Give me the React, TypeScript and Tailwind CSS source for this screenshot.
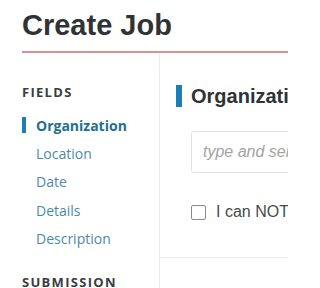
import React from 'react'

const FIELDS = ['Organization', 'Location', 'Date', 'Details', 'Description']

export default function App() {
  return (
    <div className="h-[288px] w-[288px] overflow-hidden bg-white pl-[22px]">
      {/* Header */}
      <div className="h-[53px] border-b-2 border-[#d9908f] pt-[7px]">
        <h1 className="text-[29px] font-bold leading-[36px] text-[#2f3336] [font-family:'Liberation_Sans',Arial,sans-serif]">
          Create Job
        </h1>
      </div>

      <div className="flex">
        {/* Sidebar */}
        <div className="w-[138px] shrink-0 border-r border-[#ececec] pt-[31px] [font-family:'Open_Sans',sans-serif]">
          <div className="text-[13px] font-bold uppercase leading-[16px] tracking-[0.1em] text-[#3a3d40]">Fields</div>
          <ul className="mt-[11px]">
            {FIELDS.map((f, i) => (
              <li key={f} className="flex h-[28.3px] items-center">
                {i === 0 ? (
                  <>
                    <span className="h-[16px] w-[4px] bg-[#1b7fb3]" />
                    <span className="ml-[10px] text-[14px] font-bold text-[#1f6f91]">{f}</span>
                  </>
                ) : (
                  <span className="ml-[14px] text-[14px] text-[#4b8aa6]">{f}</span>
                )}
              </li>
            ))}
          </ul>
          <div className="mt-[22px] text-[13px] font-bold uppercase leading-[16px] tracking-[0.1em] text-[#3a3d40]">Submission</div>
        </div>

        {/* Main */}
        <div className="min-w-0 flex-1 [font-family:'Liberation_Sans',Arial,sans-serif]">
          <div className="h-[204px] pl-[16px] pt-[31px]">
            <div className="flex items-center whitespace-nowrap">
              <span className="h-[22px] w-[6px] shrink-0 bg-[#1b7fb3]" />
              <span className="ml-[9px] text-[20px] font-bold leading-[24px] text-[#2f3336]">
                Organization
              </span>
            </div>
            <div className="ml-[15px] mt-[23px] flex h-[42px] w-[200px] items-center rounded-[3px] border border-[#e3e3e3] pl-[11px]">
              <span className="whitespace-nowrap text-[16px] italic text-[#a3a3a3]">
                type and select an organization
              </span>
            </div>
            <label className="ml-[15px] mt-[27px] flex items-center whitespace-nowrap">
              <span className="h-[15px] w-[15px] shrink-0 rounded-[2px] border border-[#8a8a8a] bg-white" />
              <span className="ml-[10px] text-[16px] text-[#4a4a4a]">I can NOT find my organization</span>
            </label>
          </div>
          <div className="border-t border-[#ececec]" />
        </div>
      </div>
    </div>
  )
}
